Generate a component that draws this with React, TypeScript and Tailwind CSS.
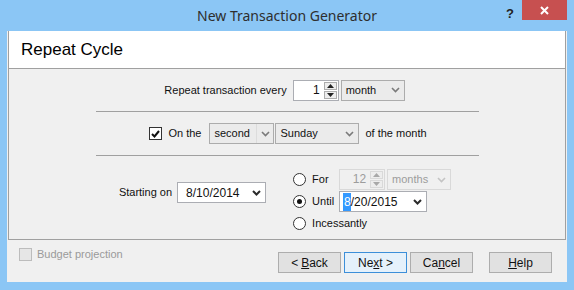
import React from "react";

const ui = { fontFamily: '"Liberation Sans", Arial, sans-serif' };

function Chevron({ dark, disabled }: { dark?: boolean; disabled?: boolean }) {
    const color = disabled ? "#c4c4c4" : dark ? "#2b2b2b" : "#7a7a7a";
    return (
        <svg width="9" height="6" viewBox="0 0 9 6" className="shrink-0">
            <polyline points="1,1 4.5,4.5 8,1" fill="none" stroke={color} strokeWidth={dark ? 2 : 1.6} />
        </svg>
    );
}

function Dropdown({ value, width, divider, disabled }: { value: string; width: string; divider?: boolean; disabled?: boolean }) {
    return (
        <div
            className={`${width} h-[21px] flex items-center border ${disabled ? "border-[#d9d9d9] bg-[#f0f0f0] text-[#9c9c9c]" : "border-[#acacac] bg-[#ebebeb] text-[#111]"}`}
        >
            <span className="flex-1 pl-[4px] truncate">{value}</span>
            <div className={`h-full w-[17px] flex items-center justify-center ${divider ? "border-l border-[#dcdcdc]" : ""}`}>
                <Chevron disabled={disabled} />
            </div>
        </div>
    );
}

function Spinner({ value, disabled }: { value: string; disabled?: boolean }) {
    const arrow = disabled ? "#a8a8a8" : "#222";
    return (
        <div
            className={`w-[46px] h-[21px] flex items-stretch border ${disabled ? "border-[#d9d9d9] bg-[#f0f0f0] text-[#9c9c9c]" : "border-[#abadb3] bg-white text-[#111]"}`}
        >
            <span className="flex-1 text-right pr-[4px] leading-[19px] text-[12px]">{value}</span>
            <div className="w-[14px] flex flex-col py-[1px] pr-[1px] gap-[1px]">
                <div className={`flex-1 border ${disabled ? "border-[#d9d9d9]" : "border-[#acacac]"} bg-[#ededed] flex items-center justify-center`}>
                    <svg width="7" height="4" viewBox="0 0 7 4"><polygon points="0,4 3.5,0 7,4" fill={arrow} /></svg>
                </div>
                <div className={`flex-1 border ${disabled ? "border-[#d9d9d9]" : "border-[#acacac]"} bg-[#ededed] flex items-center justify-center`}>
                    <svg width="7" height="4" viewBox="0 0 7 4"><polygon points="0,0 7,0 3.5,4" fill={arrow} /></svg>
                </div>
            </div>
        </div>
    );
}

function DateBox({ width, children }: { width: string; children: React.ReactNode }) {
    return (
        <div className={`${width} h-[21px] flex items-center border border-[#abadb3] bg-white text-[#111]`}>
            <span className="flex-1 pl-[3px] text-[12px] flex">{children}</span>
            <div className="w-[17px] flex items-center justify-center">
                <Chevron dark />
            </div>
        </div>
    );
}

function Radio({ checked }: { checked?: boolean }) {
    return (
        <div className="w-[13px] h-[13px] rounded-full border border-[#333] bg-white flex items-center justify-center shrink-0">
            {checked && <div className="w-[5px] h-[5px] rounded-full bg-[#111]" />}
        </div>
    );
}

function Button({ children, focused }: { children: React.ReactNode; focused?: boolean }) {
    return (
        <div
            className={`w-[63px] h-[21px] flex items-center justify-center border text-[12px] text-[#111] ${focused ? "border-[#3c8fd9] bg-[#e5f1fb]" : "border-[#adadad] bg-[#e1e1e1]"}`}
        >
            {children}
        </div>
    );
}

function Separator() {
    return <div className="w-[383px] h-px bg-[#a0a0a0] mx-auto" />;
}

export default function App() {
    return (
        <div className="w-[574px] h-[290px] bg-[#8bc6f5] flex flex-col px-[7px] pb-[8px] overflow-hidden" style={ui}>
            {/* title bar */}
            <div className="h-[31px] relative flex items-center justify-center shrink-0">
                <span className="text-[14px] text-[#2e2e2e] -mt-[1px]" style={{ fontFamily: '"Noto Sans", "Open Sans", sans-serif' }}>
                    New Transaction Generator
                </span>
                <span className="absolute left-[499px] top-[4px] text-[13px] font-bold text-[#222]">?</span>
                <div className="absolute left-[515px] top-0 w-[45px] h-[20px] bg-[#c75050] flex items-center justify-center">
                    <svg width="9" height="9" viewBox="0 0 9 9">
                        <path d="M1 1 L8 8 M8 1 L1 8" stroke="#fff" strokeWidth="2" />
                    </svg>
                </div>
            </div>

            <div className="flex-1 bg-[#f0f0f0] flex flex-col text-[11px] text-[#111]">
                <div className="mx-px border-x border-b border-[#a0a0a0] flex flex-col">
                    {/* header */}
                    <div className="h-[38px] bg-white border-b border-[#a0a0a0] flex items-center pl-[12px]">
                        <span className="text-[17px] text-black">Repeat Cycle</span>
                    </div>

                    {/* repeat every */}
                    <div className="h-[42px] flex items-center justify-center pr-[5px]">
                        <span className="mr-[6px]">Repeat transaction every</span>
                        <Spinner value="1" />
                        <div className="w-[2px]" />
                        <Dropdown value="month" width="w-[64px]" />
                    </div>
                    <Separator />

                    {/* on the */}
                    <div className="h-[43px] flex items-center justify-center pl-[2px]">
                        <div className="w-[13px] h-[13px] border border-[#333] bg-white flex items-center justify-center mr-[6px]">
                            <svg width="9" height="8" viewBox="0 0 9 8">
                                <polyline points="1,4 3.5,6.5 8,1" fill="none" stroke="#111" strokeWidth="2" />
                            </svg>
                        </div>
                        <span className="mr-[8px]">On the</span>
                        <Dropdown value="second" width="w-[65px]" divider />
                        <div className="w-px" />
                        <Dropdown value="Sunday" width="w-[84px]" />
                        <span className="ml-[6px]">of the month</span>
                    </div>
                    <Separator />

                    {/* starting / ending */}
                    <div className="h-[83px] flex items-start justify-center pr-[4px]">
                        <div className="flex items-center mt-[26px]">
                            <span className="mr-[5px]">Starting on</span>
                            <DateBox width="w-[89px]">
                                <span className="pl-[5px]">8/10/2014</span>
                            </DateBox>
                        </div>
                        <div className="ml-[27px] mt-[13px] flex flex-col gap-[1px]">
                            <div className="flex items-center h-[21px]">
                                <div className="w-[46px] flex items-center gap-[6px]">
                                    <Radio />
                                    <span>For</span>
                                </div>
                                <Spinner value="12" disabled />
                                <div className="w-[2px]" />
                                <Dropdown value="months" width="w-[64px]" disabled />
                            </div>
                            <div className="flex items-center h-[21px]">
                                <div className="w-[46px] flex items-center gap-[6px]">
                                    <Radio checked />
                                    <span>Until</span>
                                </div>
                                <DateBox width="w-[88px]">
                                    <span className="pl-[1px] bg-[#3399ff] text-white">8</span>
                                    <span>/20/2015</span>
                                </DateBox>
                            </div>
                            <div className="flex items-center h-[21px]">
                                <div className="flex items-center gap-[6px]">
                                    <Radio />
                                    <span>Incessantly</span>
                                </div>
                            </div>
                        </div>
                    </div>
                </div>

                {/* footer */}
                <div className="flex-1 flex items-start pl-[12px] pr-[15px] pt-[6px]">
                    <div className="flex items-center gap-[5px] text-[#9a9a9a]">
                        <div className="w-[13px] h-[13px] border border-[#bcbcbc] bg-[#e6e6e6]" />
                        <span>Budget projection</span>
                    </div>
                    <div className="flex-1" />
                    <div className="flex gap-[3px] mt-[6px]">
                        <Button>
                            &lt; <span className="underline ml-[3px]">B</span>ack
                        </Button>
                        <Button focused>
                            Ne<span className="underline">x</span>t &gt;
                        </Button>
                        <Button>
                            Ca<span className="underline">n</span>cel
                        </Button>
                        <div className="w-[10px]" />
                        <Button>
                            <span className="underline">H</span>elp
                        </Button>
                    </div>
                </div>
            </div>
        </div>
    );
}
